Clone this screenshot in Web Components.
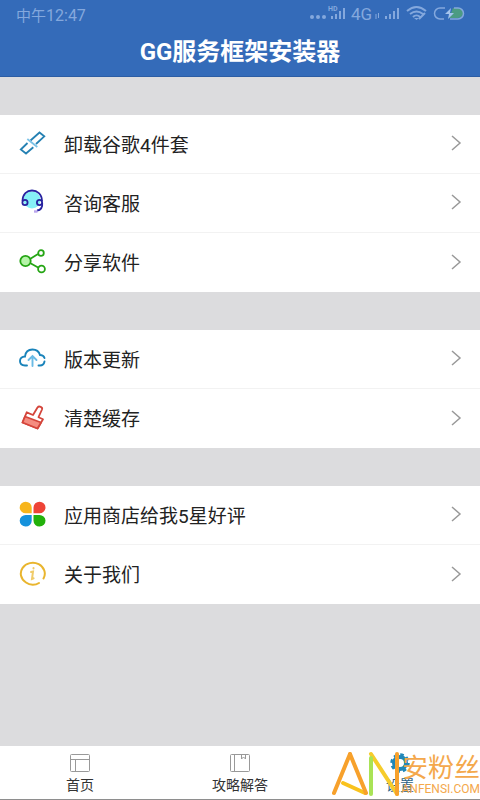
<!DOCTYPE html>
<html lang="zh-CN">
<head>
<meta charset="utf-8">
<meta name="viewport" content="width=device-width, initial-scale=1">
<title>GG服务框架安装器</title>
<style>
html, body { margin: 0; height: 100%; }
body { font-family: Roboto, "Noto Sans CJK SC", sans-serif; color: #222; background: #dcdcde; }
</style>
</head>
<body>
<settings-app></settings-app>
<script>
const ICONS = {
  uninstall: `<svg viewBox="0 0 28 28" fill="none" stroke="#2581b3" stroke-width="1.8"><path d="M12.500 11.500l9-8 4.800 3.800-8.300 7.700M9.500 14l-6.700 6.500 5.200 4 7.300-6.300"/><path d="M9.300 10l10 8" stroke="#7cc3e8"/></svg>`,
  service: `<svg viewBox="0 0 28 28" fill="none" stroke="#2723a0" stroke-width="1.8"><circle cx="14" cy="12" r="8.500" fill="#86f1f7" stroke="none"/><path d="M4.500 13C4.500 6 9 2.500 14 2.500s10 3.500 10 10.500"/><circle cx="7" cy="14.500" r="2.600"/><circle cx="21.500" cy="14.500" r="2.600"/><path d="M24.200 15c.5 5-1.200 7-5.200 7.500"/><path d="M16 23.500h3.500" stroke="#b9a4ec" stroke-width="2.400"/></svg>`,
  share: `<svg viewBox="0 0 28 28" fill="none" stroke="#25a514" stroke-width="1.800"><path d="M12 11l8-5M12 15l9 5"/><circle cx="7.500" cy="13" r="5.200" fill="#b5f4a8"/><circle cx="23" cy="5" r="2.800"/><circle cx="23.500" cy="21" r="3.400"/></svg>`,
  update: `<svg viewBox="0 0 28 28" fill="none" stroke="#1983ba" stroke-width="1.900" stroke-linecap="round"><path d="M9 21.500H7C3.500 21.500 2 19.500 2 17c0-2.500 2-4.500 5-4.500C7.500 8 10.500 5.500 14.500 5.500c4 0 6.500 2 7.500 5.500 2.500 0 4 1.500 4.500 3M26.500 17.500c-.5 2.500-2 4-4.500 4h-1.500"/><path d="M14.500 22v-10m-4 4l4-4 4 4" stroke="#6bbbe5"/></svg>`,
  clean: `<svg viewBox="0 0 28 28" fill="none" stroke="#d4453b" stroke-width="1.800" stroke-linejoin="round"><path d="M8.700 8.300l6.300 2.700 4.500-7.500c1.500-2 5.500-.5 4.500 2l-3.500 7.700 4.500 2-5.500 9.300-15-6z"/><path d="M7 12.500l16 6-3.500 6L4.500 18.500z" fill="#f58c80"/></svg>`,
  rate: `<svg viewBox="0 0 28 28"><path d="M13.700 13.300H8a6 5.800 0 1 1 5.700-5.800z" fill="#f7b51c"/><path d="M15.500 13.300h5.700a6 5.800 0 1 0-5.700-5.800z" fill="#ee4437"/><path d="M13.700 15H8a6 5.800 0 1 0 5.700 5.800z" fill="#1592dc"/><path d="M15.500 15h5.700a6 5.800 0 1 1-5.700 5.800z" fill="#23b10b"/></svg>`,
  about: `<svg viewBox="0 0 28 28" fill="none" stroke="#e9b52e" stroke-width="2" stroke-linecap="round"><path d="M21 23C17.500 25.200 12 25.500 8 22.500A12 10.800 0 1 1 25.500 18.500"/><path d="M15.500 8v.4M13 12l2-.4-1 7.400 1.600-.6" stroke="#f0cb69"/></svg>`,
  home: `<svg viewBox="0 0 22 20" fill="none" stroke="#999"><rect x="1.500" y="1.500" width="19" height="17" rx="1"/><path d="M1.500 6.500h19M6.500 6.500v12"/></svg>`,
  guide: `<svg viewBox="0 0 22 20" fill="none" stroke="#999"><rect x="1.500" y="1.500" width="19" height="17" rx="1"/><path d="M5.500 1.500v17M12.500 1.500v4.500l2-2 2 2V1.500"/></svg>`,
  gear: `<svg viewBox="0 0 22 20" fill="none" stroke="#2187b8"><circle cx="11" cy="10" r="6" stroke-width="4"/><circle cx="11" cy="10" r="8.500" stroke-width="2.500" stroke-dasharray="3.600 3.070"/></svg>`
};

const define = (name, markup) => {
  const template = document.createElement("template");
  customElements.define(name, class extends HTMLElement {
    constructor() {
      super();
      this.attachShadow({ mode: "open" });
    }
    connectedCallback() {
      template.innerHTML = typeof markup === "function" ? markup(this) : markup;
      this.shadowRoot.replaceChildren(template.content.cloneNode(true));
    }
  });
};

define("status-bar", `<style>
:host { display: flex; justify-content: space-between; align-items: center; height: 28px; padding: 0 14px 0 16px; color: #84a8dd; font-size: 15px; }
.digits { font-size: 16px; }
svg { display: block; width: 157px; height: 24px; }
</style>
<span>中午<span class="digits">12:47</span></span>
<svg viewBox="309 2 157 24" fill="none" stroke="#84a8dd" role="img" aria-label="信号、网络与电量">
<g fill="#84a8dd" stroke="none"><circle cx="312" cy="17" r="2"/><circle cx="318" cy="17" r="2"/><circle cx="324" cy="17" r="2"/>
<text x="328" y="11" font-size="7" font-weight="700">HD</text><text x="351" y="20" font-size="17">4G</text></g>
<path stroke-width="2" d="M332 19v-3M336 19v-5M340 19v-8M344 19V8M386 19v-3M390 19v-5M394 19v-8M398 19V8"/>
<path d="M376 14v5M378.500 13v5"/>
<path stroke-width="2" d="M407 11c6-5 13-5 19 0M410 14c4-3 9-3 13 0M413 17c2-2 5-2 7 0M419 19l6-6"/>
<path fill="#84a8dd" stroke="none" d="M414 18h5l-2.500 2z"/>
<path fill="#4c9b83" stroke="none" d="M453 8h5a5 5 0 0 1 0 10h-9z"/>
<path stroke-width="1.500" d="M445 8h-5a5 5 0 0 0 0 11h4M454 8h4a5 5 0 0 1 0 11h-8"/>
<path fill="#a4c3ec" stroke="none" d="M451 8l-6 6h4l-1 5 6-6h-4z"/></svg>`);

define("title-bar", `<style>
:host { display: block; background: #346bb9; border-bottom: 1px solid #2c5da4; }
h1 { margin: 0; height: 48px; line-height: 48px; text-align: center; color: #fff; font-size: 24px; font-weight: 700; }
</style><status-bar></status-bar><h1><slot></slot></h1>`);

define("setting-group", `<style>
:host { display: block; margin-top: 38px; background: #fff; }
::slotted(:not(:last-child)) { border-bottom: 1px solid #f2f2f2; }
</style><slot></slot>`);

define("setting-row", el => `<style>
:host { display: block; height: 59px; box-sizing: border-box; }
button { display: flex; align-items: center; width: 100%; height: 100%; border: 0; margin: 0; padding: 0 18px 2px; background: none; font: inherit; font-size: 19px; color: #222; text-align: left; }
.icon svg { display: block; width: 28px; height: 28px; }
.label { flex: 1; padding-left: 18px; }
.arrow { width: 12px; height: 16px; }
</style><button type="button"><span class="icon">${ICONS[el.getAttribute("icon")]}</span><span class="label"><slot></slot></span><svg class="arrow" viewBox="0 0 12 16" fill="none" stroke="#999" stroke-width="1.500"><path d="M2 1l8 7-8 7"/></svg></button>`);

define("tab-item", el => `<style>
:host { display: block; flex: 1; }
a { display: flex; flex-direction: column; align-items: center; padding-top: 7px; color: #333; font-size: 14px; line-height: 20px; text-decoration: none; }
:host([active]) a { color: #2c6387; }
svg { display: block; width: 22px; height: 20px; margin-bottom: 2px; }
</style><a href="#${el.getAttribute("icon")}">${ICONS[el.getAttribute("icon")]}<span><slot></slot></span></a>`);

define("tab-bar", `<style>
:host { display: flex; height: 54px; box-sizing: border-box; background: #fff; border-bottom: 1px solid #8e8e8e; }
</style><slot></slot>`);

define("site-mark", `<style>
:host { position: absolute; right: 0; bottom: 0; display: flex; align-items: flex-end; pointer-events: none; color: #f4a84c; }
svg { width: 70px; height: 50px; flex: none; }
.words { display: flex; flex-direction: column; align-items: flex-end; }
.cn { font: 400 26px/30px "Noto Sans CJK SC", sans-serif; }
.site { font: 12px/16px Roboto, sans-serif; margin-bottom: 3px; }
</style>
<svg viewBox="331 750 70 50" fill="none" stroke-width="4" stroke-linecap="round" aria-hidden="true">
<line x1="342" y1="783" x2="364" y2="793" stroke="#f9c21d"/><line x1="349" y1="754" x2="365" y2="793" stroke="#f7a12c"/><line x1="349" y1="754" x2="333" y2="793" stroke="#f7a12c"/>
<line x1="370" y1="754" x2="396" y2="794" stroke="#f6cc2b"/><line x1="370" y1="794" x2="370" y2="758" stroke="#a9e356"/><line x1="396" y1="794" x2="396" y2="754" stroke="#f7a12c"/></svg>
<span class="words"><span class="cn">安粉丝</span><span class="site">ANFENSI.COM</span></span>`);

define("settings-app", `<style>
:host { display: flex; flex-direction: column; min-height: 100vh; position: relative; overflow: hidden; }
main { flex: 1; }
</style>
<title-bar>GG服务框架安装器</title-bar>
<main>
<setting-group><setting-row icon="uninstall">卸载谷歌4件套</setting-row><setting-row icon="service">咨询客服</setting-row><setting-row icon="share">分享软件</setting-row></setting-group>
<setting-group><setting-row icon="update">版本更新</setting-row><setting-row icon="clean">清楚缓存</setting-row></setting-group>
<setting-group><setting-row icon="rate">应用商店给我5星好评</setting-row><setting-row icon="about">关于我们</setting-row></setting-group>
</main>
<tab-bar><tab-item icon="home">首页</tab-item><tab-item icon="guide">攻略解答</tab-item><tab-item icon="gear" active>设置</tab-item></tab-bar>
<site-mark></site-mark>`);
</script>
</body>
</html>
